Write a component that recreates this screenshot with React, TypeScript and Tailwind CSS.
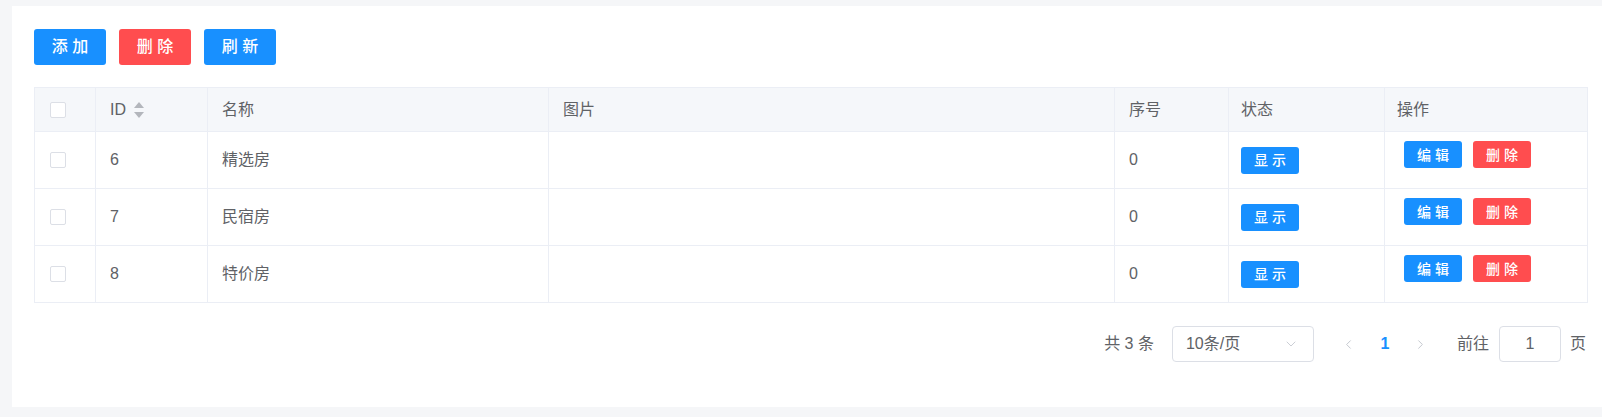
import { ChevronDown, ChevronLeft, ChevronRight } from 'lucide-react'

const font = 'font-["Liberation_Sans","Noto_Sans_CJK_SC",sans-serif]'

const rows = [
  { id: 6, name: '精选房', sort: 0 },
  { id: 7, name: '民宿房', sort: 0 },
  { id: 8, name: '特价房', sort: 0 },
]

const cols = 'grid grid-cols-[61px_112px_341px_566px_114px_156px_203px]'
const cell = 'border-r border-b border-[#ebeef5]'

function Checkbox() {
  return <span className="block h-4 w-4 rounded-[2px] border border-[#dcdfe6] bg-white" />
}

function SortCaret() {
  return (
    <svg width="10" height="16" viewBox="0 0 10 16" className="ml-2">
      <path d="M5 0 L10 6 L0 6 Z" fill="#b3b6bc" />
      <path d="M0 10 L10 10 L5 16 Z" fill="#b3b6bc" />
    </svg>
  )
}

function MiniButton({ label, tone }: { label: string; tone: 'blue' | 'red' }) {
  return (
    <button
      className={`h-[27px] w-[58px] rounded-[3px] text-[14px] font-medium leading-none text-white ${
        tone === 'blue' ? 'bg-[#1890ff]' : 'bg-[#ff4d4f]'
      }`}
    >
      {label}
    </button>
  )
}

export default function App() {
  return (
    <div className={`${font} min-h-[417px] bg-[#f5f6f8] pb-[10px] pl-[12px] pt-[6px] text-[16px] text-[#606266]`}>
      <div className="h-[401px] bg-white pl-[22px] pr-[14px] pt-[23px]">
        <div className="flex gap-[13px]">
          <button className="h-9 w-[72px] rounded-[3px] bg-[#1890ff] text-[16px] font-medium text-white">添 加</button>
          <button className="h-9 w-[72px] rounded-[3px] bg-[#ff4d4f] text-[16px] font-medium text-white">删 除</button>
          <button className="h-9 w-[72px] rounded-[3px] bg-[#1890ff] text-[16px] font-medium text-white">刷 新</button>
        </div>

        <div className="mt-[22px] w-[1554px] border-l border-t border-[#ebeef5]">
          <div className={`${cols} h-[44px] bg-[#f5f7fa]`}>
            <div className={`${cell} flex items-center pl-[15px]`}>
              <Checkbox />
            </div>
            <div className={`${cell} flex items-center pl-[14px]`}>
              ID
              <SortCaret />
            </div>
            <div className={`${cell} flex items-center pl-[14px]`}>名称</div>
            <div className={`${cell} flex items-center pl-[14px]`}>图片</div>
            <div className={`${cell} flex items-center pl-[14px]`}>序号</div>
            <div className={`${cell} flex items-center pl-[12px]`}>状态</div>
            <div className={`${cell} flex items-center pl-[12px]`}>操作</div>
          </div>
          {rows.map((r) => (
            <div key={r.id} className={`${cols} h-[57px]`}>
              <div className={`${cell} flex items-center pl-[15px]`}>
                <Checkbox />
              </div>
              <div className={`${cell} flex items-center pl-[14px]`}>{r.id}</div>
              <div className={`${cell} flex items-center pl-[14px]`}>{r.name}</div>
              <div className={cell} />
              <div className={`${cell} flex items-center pl-[14px]`}>{r.sort}</div>
              <div className={`${cell} flex items-center pl-[12px]`}>
                <MiniButton label="显 示" tone="blue" />
              </div>
              <div className={`${cell} flex items-start gap-[11px] pl-[19px] pt-[9px]`}>
                <MiniButton label="编 辑" tone="blue" />
                <MiniButton label="删 除" tone="red" />
              </div>
            </div>
          ))}
        </div>

        <div className="mt-[23px] flex w-[1554px] items-center justify-end pr-[2px]">
          <span>共 3 条</span>
          <div className="ml-[18px] flex h-9 w-[142px] items-center justify-between rounded-[4px] border border-[#dcdfe6] pl-[13px] pr-[14px]">
            <span>10条/页</span>
            <ChevronDown className="h-4 w-4 text-[#c0c4cc]" strokeWidth={1.25} />
          </div>
          <div className="ml-[17px] flex h-9 w-9 items-center justify-center">
            <ChevronLeft className="h-[15px] w-[15px] text-[#c0c4cc]" strokeWidth={1.5} />
          </div>
          <div className="flex h-9 w-9 items-center justify-center font-bold text-[#1890ff]">1</div>
          <div className="flex h-9 w-9 items-center justify-center">
            <ChevronRight className="h-[15px] w-[15px] text-[#c0c4cc]" strokeWidth={1.5} />
          </div>
          <span className="ml-[18px]">前往</span>
          <div className="ml-[10px] flex h-9 w-[62px] items-center justify-center rounded-[4px] border border-[#dcdfe6]">1</div>
          <span className="ml-[9px]">页</span>
        </div>
      </div>
    </div>
  )
}
